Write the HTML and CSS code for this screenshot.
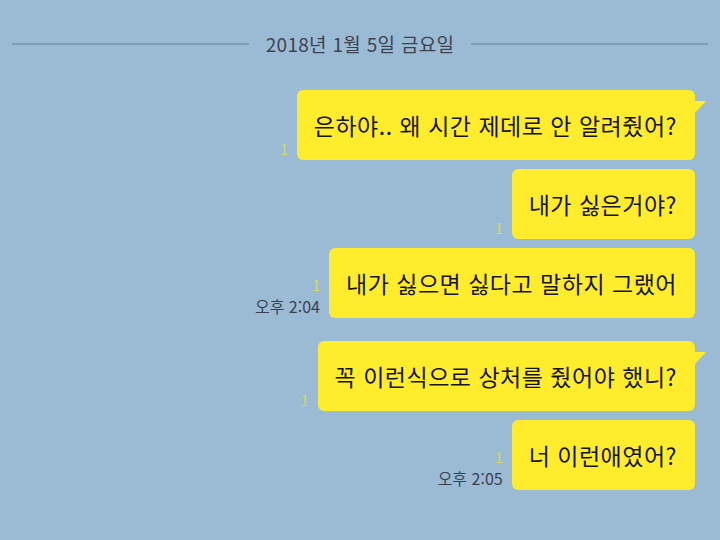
FILE: index.html
```html
<!DOCTYPE html>
<html lang="ko">
<head>
    <meta charset="UTF-8">
    <meta name="viewport" content="width=device-width, initial-scale=1.0">
    <title>Chat</title>
    <link rel="stylesheet" href="styles.css">
</head>
<body>
    <div class="screen">
        <div class="date-divider">2018년 1월 5일 금요일</div>
        <div class="messages">
            <div class="msg group-start">
                <div class="meta"><span class="unread">1</span></div>
                <div class="bubble tail">은하야.. 왜 시간 제데로 안 알려줬어?</div>
            </div>
            <div class="msg">
                <div class="meta"><span class="unread">1</span></div>
                <div class="bubble">내가 싫은거야?</div>
            </div>
            <div class="msg">
                <div class="meta"><span class="unread">1</span><span class="time">오후 2:04</span></div>
                <div class="bubble">내가 싫으면 싫다고 말하지 그랬어</div>
            </div>
            <div class="msg group-start">
                <div class="meta"><span class="unread">1</span></div>
                <div class="bubble tail">꼭 이런식으로 상처를 줬어야 했니?</div>
            </div>
            <div class="msg">
                <div class="meta"><span class="unread">1</span><span class="time">오후 2:05</span></div>
                <div class="bubble">너 이런애였어?</div>
            </div>
        </div>
    </div>
</body>
</html>
```

FILE: styles.css
```css
body {
    margin: 0;
    background-color: #9bbbd4;
    font-family: "Noto Sans CJK KR", "Noto Sans", sans-serif;
}
.screen {
    height: 540px;
    overflow: hidden;
}
.date-divider {
    display: flex;
    align-items: center;
    gap: 17px;
    padding: 32px 12px 0;
    font-size: 19px;
    letter-spacing: 0.3px;
    line-height: 24px;
    color: #3b4350;
}
.date-divider::before,
.date-divider::after {
    content: "";
    flex: 1;
    height: 2px;
    background-color: #7e9eb8;
}
.messages {
    display: flex;
    flex-direction: column;
    align-items: flex-end;
    padding: 25px 25px 0 0;
}
.msg {
    display: flex;
    align-items: flex-end;
    gap: 9px;
    margin-top: 9px;
}
.msg.group-start {
    margin-top: 23px;
}
.msg:first-child {
    margin-top: 9px;
}
.meta {
    display: flex;
    flex-direction: column;
    align-items: flex-end;
    padding-bottom: 3px;
}
.unread {
    font-size: 14px;
    line-height: 16px;
    color: #dcd566;
}
.time {
    font-size: 16px;
    line-height: 18px;
    color: #38424f;
    margin-top: 4px;
}
.bubble {
    position: relative;
    background-color: #ffec2c;
    color: #151515;
    border-radius: 6px;
    padding: 20px 18px 20px 17px;
    font-size: 23px;
    letter-spacing: 0.5px;
    line-height: 30px;
    white-space: nowrap;
}
.bubble.tail::after {
    content: "";
    position: absolute;
    top: 11px;
    right: -11px;
    width: 12px;
    height: 13px;
    background-color: #ffec2c;
    clip-path: polygon(0 0, 100% 0, 0 100%);
}
```
